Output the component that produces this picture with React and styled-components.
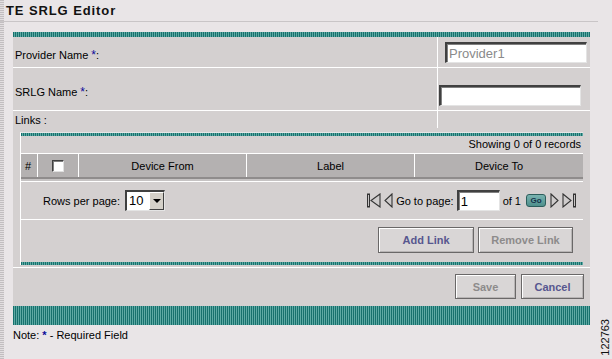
import React from 'react';
import styled, {createGlobalStyle} from 'styled-components';

const GlobalStyle = createGlobalStyle`
	html, body {
		margin: 0;
		padding: 0;
		background: #e9e5e7;
	}
	body {
		font-family: "Liberation Sans", Arial, sans-serif;
		font-size: 11px;
		color: #000;
	}
`;

const Page = styled.div`
	display: flex;
	width: 612px;
	height: 359px;
	overflow: hidden;
	background:
		repeating-linear-gradient(180deg, #c2bec0 0 1px, #e2dee0 1px 2px) 0 0 / 4px 100% no-repeat,
		#e9e5e7;
`;

const Main = styled.div`
	display: flex;
	flex-direction: column;
	width: 598px;
`;

const Side = styled.div`
	flex: 1;
	display: flex;
	align-items: flex-end;
	justify-content: center;
	padding-bottom: 3px;
`;

const FigureNumber = styled.span`
	writing-mode: vertical-rl;
	transform: rotate(180deg);
	font-size: 11px;
	line-height: 12px;
	color: #111;
`;

const Header = styled.div`
	height: 21px;
	border-bottom: 1px solid #c9c5c7;
	padding-left: 6px;
	box-sizing: content-box;
`;

const Title = styled.h1`
	margin: 0;
	padding-top: 3px;
	font-size: 13px;
	line-height: 15px;
	font-weight: bold;
	letter-spacing: 0.9px;
	color: #111;
`;

const Panel = styled.div`
	margin: 10px 0 0 13px;
	width: 577px;
	background: #d4d0d0;
`;

const Stripe = styled.div`
	height: ${props => props.$h}px;
	background: repeating-linear-gradient(90deg, #17716d 0 1px, #5ea9a4 1px 2px);
`;

const FormRow = styled.div`
	display: flex;
	height: ${props => props.$h}px;
	border-bottom: ${props => props.$last ? 'none' : '1px solid #fff'};
`;

const LabelCell = styled.div`
	width: 424px;
	padding-left: 2px;
	padding-top: ${props => props.$top || 0}px;
	display: flex;
	align-items: center;
	box-sizing: border-box;
`;

const FieldCell = styled.div`
	flex: 1;
	border-left: 1px solid #fff;
	padding-left: ${props => props.$left}px;
	padding-top: ${props => props.$top}px;
`;

const Req = styled.sup`
	color: #0a0a9a;
	font-size: 12px;
	vertical-align: 5px;
	line-height: 0;
	margin-left: 3px;
`;

const TextInput = styled.input`
	display: block;
	box-sizing: border-box;
	width: ${props => props.$w}px;
	height: 21px;
	margin: 0;
	padding: 0 2px;
	font-family: "Liberation Sans", Arial, sans-serif;
	font-size: 13px;
	color: ${props => props.disabled ? '#8a8a8a' : '#000'};
	background: #fff;
	border-style: solid;
	border-width: 2px 1px 1px 2px;
	border-color: #404040 #e4e4e4 #e4e4e4 #404040;
	box-shadow: inset 1px 1px 0 #808080;
	outline: none;
`;

const LinksWrap = styled.div`
	padding: 4px 7px 2px 7px;
	border-bottom: 1px solid #fff;
`;

const Inner = styled.div`
	border-top: 1px solid #e6e6e6;
	border-left: 1px solid #fff;
	background: #d4d0d0;
`;

const Showing = styled.div`
	height: 17px;
	line-height: 17px;
	text-align: right;
	padding-right: 2px;
`;

const TableHead = styled.div`
	display: grid;
	grid-template-columns: 16px 41px 168px 168px 1fr;
	height: 24px;
	border-top: 1px solid #fff;
	box-sizing: border-box;
	background: #b4b1b1;
`;

const HeadCell = styled.div`
	display: flex;
	align-items: center;
	justify-content: ${props => props.$left ? 'flex-start' : 'center'};
	padding-left: ${props => props.$left ? 4 : 0}px;
	border-left: ${props => props.$first ? 'none' : '1px solid #fff'};
`;

const Checkbox = styled.span`
	display: block;
	width: 12px;
	height: 12px;
	box-sizing: border-box;
	background: #fff;
	border-style: solid;
	border-width: 1px;
	border-color: #404040 #e0e0e0 #e0e0e0 #404040;
	box-shadow: inset 1px 1px 0 #808080;
`;

const HeadRule = styled.div`
	height: 2px;
	background: #8f8c8c;
	border-bottom: 2px solid #c6c3c3;
	box-shadow: 0 1px 0 #fff;
	margin-bottom: 1px;
`;

const Pager = styled.div`
	display: flex;
	align-items: center;
	justify-content: space-between;
	height: 37px;
	padding: 0 7px 0 22px;
	border-bottom: 1px solid #fff;
`;

const PagerGroup = styled.div`
	display: flex;
	align-items: center;
	gap: ${props => props.$gap}px;
`;

const Select = styled.div`
	display: flex;
	height: 21px;
	width: 40px;
	box-sizing: border-box;
	background: #fff;
	border-style: solid;
	border-width: 2px 1px 1px 2px;
	border-color: #404040 #e4e4e4 #e4e4e4 #404040;
`;

const SelectValue = styled.span`
	flex: 1;
	font-size: 13px;
	line-height: 18px;
	padding-left: 2px;
`;

const SelectArrow = styled.span`
	width: 15px;
	display: flex;
	align-items: center;
	justify-content: center;
	background: #d4d0c8;
	border-style: solid;
	border-width: 1px;
	border-color: #fff #404040 #404040 #fff;
	box-sizing: border-box;

	&::after {
		content: '';
		border-left: 4px solid transparent;
		border-right: 4px solid transparent;
		border-top: 4px solid #000;
	}
`;

const GoButton = styled.span`
	display: inline-flex;
	align-items: center;
	justify-content: center;
	width: 20px;
	height: 13px;
	margin: 0 1px 0 2px;
	border-radius: 3px;
	background: linear-gradient(#79b3b0, #4e8f8c);
	border: 1px solid #2c5e5c;
	box-sizing: border-box;
	font-size: 8px;
	font-weight: bold;
	color: #14324a;
`;

const ButtonRow = styled.div`
	display: flex;
	justify-content: flex-end;
	gap: ${props => props.$gap}px;
	height: ${props => props.$h}px;
	padding: ${props => props.$top}px ${props => props.$right}px 0 0;
	box-sizing: border-box;
`;

const Button = styled.span`
	display: flex;
	align-items: center;
	justify-content: center;
	width: ${props => props.$w}px;
	height: ${props => props.$h}px;
	box-sizing: border-box;
	background: #d9d6d6;
	border: 1px solid #6a6868;
	box-shadow: inset 1px 1px 0 #fff, inset -1px -1px 0 #b8b5b5;
	font-size: 11px;
	font-weight: bold;
	color: ${props => props.$disabled ? '#8d8b8b' : '#57578f'};
`;

const Note = styled.div`
	margin: 4px 0 0 13px;
	line-height: 13px;
`;

const Star = styled.span`
	color: #0a0a9a;
	font-weight: bold;
`;

const PagerIcon = ({type}) => {
	const bar = type === 'first' || type === 'last';
	const left = type === 'first' || type === 'prev';
	const w = bar ? 14 : 9;
	const tri = left
		? `${w - 1},1 ${bar ? 4 : 1},7.5 ${w - 1},14`
		: `1,1 ${bar ? w - 5 : w - 1},7.5 1,14`;
	return (
		<svg width={w} height="15" viewBox={`0 0 ${w} 15`}>
			{bar && (
				<rect x={left ? 0.5 : w - 2.5} y="1" width="2" height="13" fill="#c8c5c5" stroke="#333" strokeWidth="1"/>
			)}
			<polygon points={tri} fill="#cfcccc" stroke="#333" strokeWidth="1.1" strokeLinejoin="miter"/>
		</svg>
	);
};

export default function App() {
	return (
		<Page>
			<GlobalStyle/>
			<Main>
				<Header>
					<Title>TE SRLG Editor</Title>
				</Header>
				<Panel>
					<Stripe $h={5}/>
					<FormRow $h={30}>
						<LabelCell $top={6}>Provider Name<Req>*</Req>:</LabelCell>
						<FieldCell $left={7} $top={5}>
							<TextInput $w={142} defaultValue="Provider1" disabled/>
						</FieldCell>
					</FormRow>
					<FormRow $h={42}>
						<LabelCell $top={6}>SRLG Name<Req>*</Req>:</LabelCell>
						<FieldCell $left={1} $top={17}>
							<TextInput $w={142} defaultValue=""/>
						</FieldCell>
					</FormRow>
					<FormRow $h={17} $last>
						<LabelCell>Links :</LabelCell>
						<FieldCell $left={0} $top={0}/>
					</FormRow>
					<LinksWrap>
						<Inner>
							<Stripe $h={3}/>
							<Showing>Showing 0 of 0 records</Showing>
							<TableHead>
								<HeadCell $first $left>#</HeadCell>
								<HeadCell><Checkbox/></HeadCell>
								<HeadCell>Device From</HeadCell>
								<HeadCell>Label</HeadCell>
								<HeadCell>Device To</HeadCell>
							</TableHead>
							<HeadRule/>
							<Pager>
								<PagerGroup $gap={5}>
									Rows per page:
									<Select>
										<SelectValue>10</SelectValue>
										<SelectArrow/>
									</Select>
								</PagerGroup>
								<PagerGroup $gap={3}>
									<PagerIcon type="first"/>
									<PagerIcon type="prev"/>
									<span>Go to page:</span>
									<TextInput $w={43} defaultValue="1"/>
									<span>of 1</span>
									<GoButton>Go</GoButton>
									<PagerIcon type="next"/>
									<PagerIcon type="last"/>
								</PagerGroup>
							</Pager>
							<ButtonRow $h={42} $top={7} $right={10} $gap={4}>
								<Button $w={96} $h={26}>Add Link</Button>
								<Button $w={95} $h={26} $disabled>Remove Link</Button>
							</ButtonRow>
							<Stripe $h={3}/>
						</Inner>
					</LinksWrap>
					<ButtonRow $h={38} $top={6} $right={6} $gap={5}>
						<Button $w={61} $h={25} $disabled>Save</Button>
						<Button $w={63} $h={25}>Cancel</Button>
					</ButtonRow>
					<Stripe $h={19}/>
				</Panel>
				<Note>Note: <Star>*</Star> - Required Field</Note>
			</Main>
			<Side>
				<FigureNumber>122763</FigureNumber>
			</Side>
		</Page>
	);
}
